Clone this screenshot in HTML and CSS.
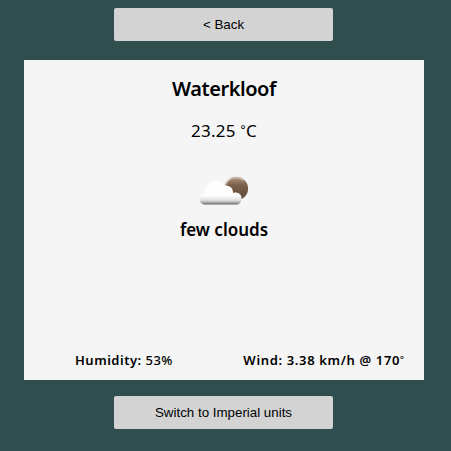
FILE: index.html
```html
<!DOCTYPE html>
<html lang="en">
<head>
<meta charset="utf-8">
<title>Weather</title>
<link rel="stylesheet" href="styles.css">
</head>
<body>
<main class="app">
  <button class="btn">&lt; Back</button>
  <section class="card">
    <h1 class="city">Waterkloof</h1>
    <p class="temp">23.25 <span class="degree">°</span>C</p>
    <svg class="icon" width="50" height="30" viewBox="0 0 50 30" aria-hidden="true">
      <defs>
        <linearGradient id="moon" x1="0" y1="0" x2="0" y2="1">
          <stop offset="0" stop-color="#b09a88"/>
          <stop offset=".35" stop-color="#7c614c"/>
          <stop offset="1" stop-color="#5c4533"/>
        </linearGradient>
        <linearGradient id="cloud" x1="0" y1="0" x2="0" y2="1">
          <stop offset="0" stop-color="#fff"/>
          <stop offset=".62" stop-color="#fdfdfd"/>
          <stop offset=".82" stop-color="#e0e0e0"/>
          <stop offset=".92" stop-color="#a8a8a8"/>
          <stop offset="1" stop-color="#626262"/>
        </linearGradient>
      </defs>
      <circle cx="37.300" cy="12.500" r="11.800" fill="url(#moon)"/>
      <path d="M26.500 10A11 11 0 0 1 44 4" fill="none" stroke="#d4c5b9" stroke-width="1.200"/>
      <path d="M5 28.500C2.500 28 .5 26 .5 22.500C.5 19 3 17 6 16.500C5.500 13 6.500 10.500 9.500 9.500C11 6.300 14 4.700 17 4.700C20.500 4.700 23 6.800 24.500 9.700C29.500 8.500 34.500 11.500 34 17C38 15.500 42.500 18 42.500 21.500C43 25 41 28 38 28.500Z" fill="url(#cloud)"/>
    </svg>
    <p class="desc">few clouds</p>
    <div class="details">
      <div class="detail"><b>Humidity: </b><span class="value">53%</span></div>
      <div class="detail wind"><b>Wind: 3.38 km/h @ 170<span class="degree">°</span></b></div>
    </div>
  </section>
  <button class="btn">Switch to Imperial units</button>
</main>
</body>
</html>
```
FILE: styles.css
```css
body {
  margin: 0;
  background: #2f4f4f;
  color: #000;
  font-family: "Noto Sans", "Open Sans", sans-serif;
}
.app {
  box-sizing: border-box;
  width: 451px;
  height: 451px;
  padding: 8px 27px 0 24px;
  display: flex;
  flex-direction: column;
  align-items: center;
}
.btn {
  width: 219px;
  height: 33px;
  margin: 0 1px 0 0;
  padding: 0;
  border: 0;
  border-radius: 2px;
  background: #d3d3d3;
  color: #000;
  font: 13.333px "Liberation Sans", Arial, sans-serif;
}
.card {
  box-sizing: border-box;
  width: 400px;
  height: 320px;
  margin: 19px 0 16px;
  padding-top: 14px;
  background: #f5f5f5;
  display: flex;
  flex-direction: column;
  align-items: center;
}
h1, p { margin: 0; }
.city {
  font-size: 20px;
  line-height: 30px;
  font-weight: 600;
  letter-spacing: -.45px;
}
.temp {
  margin-top: 14px;
  font-size: 17px;
  line-height: 26px;
  letter-spacing: .3px;
}
.degree { font-size: .7em; vertical-align: .28em; line-height: 0; }
.icon { margin-top: 32px; }
.desc {
  margin-top: 11px;
  font-size: 17px;
  line-height: 26px;
  font-weight: 600;
}
.details {
  width: 400px;
  margin-top: auto;
  padding-bottom: 10px;
  display: grid;
  grid-template-columns: 1fr 1fr;
  font-size: 13px;
  line-height: 20px;
  white-space: pre;
}
.detail { text-align: center; letter-spacing: .5px; }
.detail b { font-weight: 600; }
.value { font-weight: 500; }
.wind { letter-spacing: .65px; }
```
